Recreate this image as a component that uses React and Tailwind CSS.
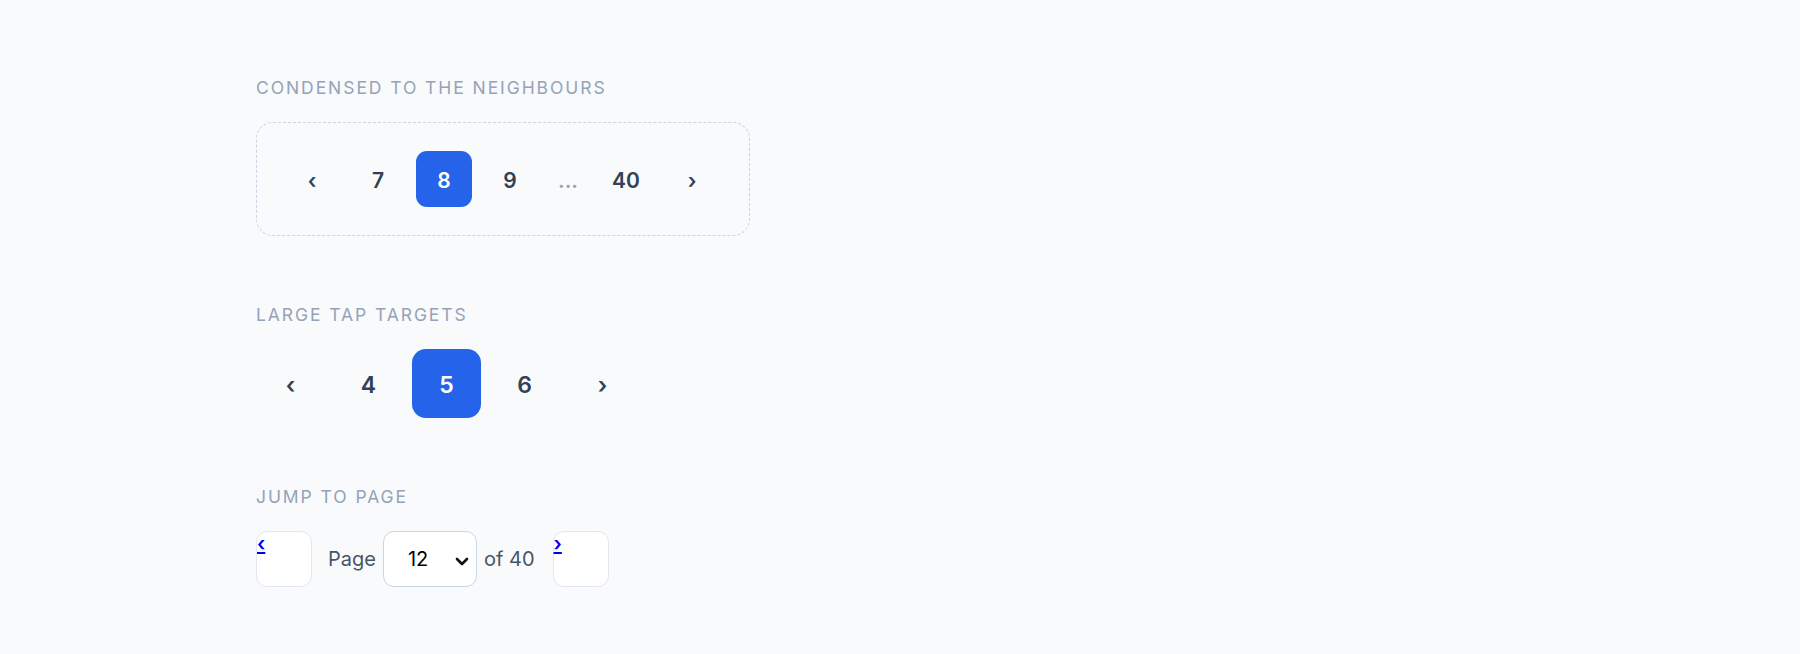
import React from "react";

const font = { fontFamily: "Inter, 'Noto Sans', sans-serif" };

function Label({ children }) {
  return (
    <div className="text-[17.5px] leading-[21px] tracking-[0.11em] text-[#94a3b8] uppercase mb-[24px]">
      {children}
    </div>
  );
}

export default function App() {
  return (
    <div style={font} className="min-h-[654px] w-full bg-[#f8fafc] pl-[256px] pt-[77px]">
      <section>
        <Label>Condensed to the neighbours</Label>
        <nav className="inline-flex items-center gap-[10px] rounded-[17px] border border-dashed border-[#cbd5e1] py-[28px] pl-[27px] pr-[29px]">
          <a className="flex h-[56px] w-[56px] items-center justify-center pt-[4px] text-[21px] font-semibold text-[#334155]">‹</a>
          <a className="flex h-[56px] w-[56px] items-center justify-center pt-[4px] text-[21px] font-semibold text-[#334155]">7</a>
          <a className="flex h-[56px] w-[56px] items-center justify-center rounded-[11px] bg-[#2563eb] pt-[4px] text-[21px] font-semibold text-white">8</a>
          <a className="flex h-[56px] w-[56px] items-center justify-center pt-[4px] text-[21px] font-semibold text-[#334155]">9</a>
          <span className="flex h-[56px] w-[40px] items-center justify-center pt-[4px] text-[21px] font-semibold text-[#94a3b8]">...</span>
          <a className="flex h-[56px] w-[56px] items-center justify-center pt-[4px] text-[21px] font-semibold text-[#334155]">40</a>
          <a className="flex h-[56px] w-[56px] items-center justify-center pt-[4px] text-[21px] font-semibold text-[#334155]">›</a>
        </nav>
      </section>

      <section className="mt-[68px]">
        <Label>Large tap targets</Label>
        <nav className="flex items-center gap-[9px]">
          <a className="flex h-[69px] w-[69px] items-center justify-center pt-[4px] text-[23px] font-semibold text-[#334155]">‹</a>
          <a className="flex h-[69px] w-[69px] items-center justify-center pt-[4px] text-[23px] font-semibold text-[#334155]">4</a>
          <a className="flex h-[69px] w-[69px] items-center justify-center rounded-[14px] bg-[#2563eb] pt-[4px] text-[23px] font-semibold text-white">5</a>
          <a className="flex h-[69px] w-[69px] items-center justify-center pt-[4px] text-[23px] font-semibold text-[#334155]">6</a>
          <a className="flex h-[69px] w-[69px] items-center justify-center pt-[4px] text-[23px] font-semibold text-[#334155]">›</a>
        </nav>
      </section>

      <section className="mt-[68px]">
        <Label>Jump to page</Label>
        <nav className="flex items-center gap-[16px]">
          <a href="#" className="block h-[56px] w-[56px] rounded-[11px] border border-[#e2e8f0] bg-white text-[20px] leading-[24px] font-semibold text-[#0000ee] underline">‹</a>
          <label className="flex items-center gap-[7px] text-[20px] text-[#475569]">
            <span>Page</span>
            <span className="relative flex h-[56px] w-[94px] items-center rounded-[11px] border border-[#cbd5e1] bg-white pl-[24px] text-[20px] text-black">
              12
              <svg className="absolute right-[7px] top-[25px]" width="14" height="9" viewBox="0 0 14 9" fill="none">
                <path d="M2 2 L7 7 L12 2" stroke="#111" strokeWidth="2.6" strokeLinecap="round" strokeLinejoin="round" />
              </svg>
            </span>
            <span className="mr-[2px]">of 40</span>
          </label>
          <a href="#" className="block h-[56px] w-[56px] rounded-[11px] border border-[#e2e8f0] bg-white text-[20px] leading-[24px] font-semibold text-[#0000ee] underline">›</a>
        </nav>
      </section>
    </div>
  );
}
